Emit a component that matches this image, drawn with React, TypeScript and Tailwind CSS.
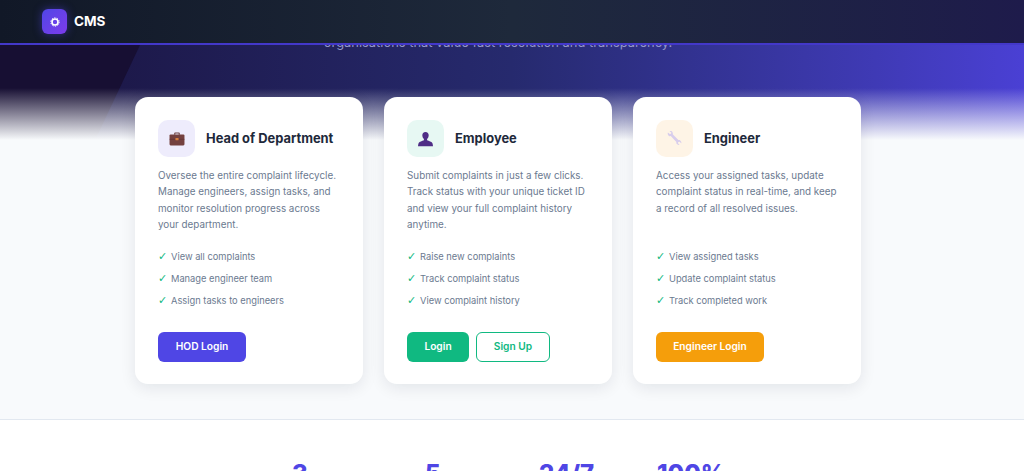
import type { ReactNode } from 'react';

type CardProps = {
  title: string;
  tint: string;
  icon: ReactNode;
  text: string[];
  items: string[];
  children: ReactNode;
};

const Briefcase = () => (
  <svg width="16" height="14" viewBox="0 0 17 15">
    <path d="M5.5 3V1.500Q5.500.6 6.400.6h4.200q.9 0 .9.9V3h-1.200V1.700H6.700V3z" fill="#6b3d3d" />
    <rect x="0.5" y="2.6" width="16" height="11.8" rx="1.2" fill="#74413f" />
    <rect x="0.5" y="7.4" width="16" height="0.6" fill="#5c3233" />
    <rect x="6.8" y="6.4" width="3.4" height="2.4" rx="0.4" fill="#d9803e" />
  </svg>
);

const Person = () => (
  <svg width="15" height="16" viewBox="0 0 16 16">
    <path
      d="M8 .4c2.200 0 3.400 1.500 3.400 3.600 0 1.600-.7 3.200-1.700 4v1.200c1.900.7 4.700 1.500 5.600 3 .4.8.6 2 .7 3.400H0c.1-1.400.3-2.600.7-3.400.9-1.500 3.700-2.300 5.600-3V8c-1-.8-1.700-2.400-1.700-4C4.600 1.900 5.800.4 8 .4z"
      fill="#4f2d86"
    />
  </svg>
);

const Wrench = () => (
  <svg width="15" height="15" viewBox="0 0 16 16">
    <path
      d="M1 1.500 3 3.300l1.300-.4.300-1.300L2.700.3C4.100-.2 5.400.300 6 1.500c.3.700.3 1.300.1 2l6 6.200c.7-.2 1.400-.1 2 .3 1 .7 1.500 1.900 1.100 3.100l-1.900-1.700-1.300.4-.3 1.300 1.800 1.600c-1.200.4-2.500 0-3.200-1-.4-.6-.5-1.300-.3-2L4 5.400c-.7.200-1.400.1-2-.2C.8 4.500.5 2.800 1 1.500z"
      fill="#d8cdec"
    />
  </svg>
);

function Card({ title, tint, icon, text, items, children }: CardProps) {
  return (
    <div className="w-[228px] h-[287px] bg-white rounded-[13px] px-[23px] pt-[23px] shadow-[0_4px_16px_rgba(15,23,42,0.09)] flex flex-col">
      <div className="flex items-center gap-[11px]">
        <div className={`w-[37px] h-[37px] rounded-[10px] flex items-center justify-center ${tint}`}>{icon}</div>
        <h3 className="text-[12.9px] font-bold text-[#1e293b] whitespace-nowrap">{title}</h3>
      </div>
      <div className="mt-[10px] h-[66px] text-[9.85px] leading-[16.3px] text-[#6b7a90]">
        {text.map((line) => (
          <p key={line} className="whitespace-nowrap">{line}</p>
        ))}
      </div>
      <ul className="mt-[13px] flex flex-col">
        {items.map((item) => (
          <li key={item} className="h-[22px] flex items-center text-[9.3px] text-[#6b7a90]">
            <span className="w-[13px] font-['DejaVu_Sans',sans-serif] text-[11px] font-bold text-[#10b981]">✓</span>
            <span>{item}</span>
          </li>
        ))}
      </ul>
      <div className="mt-[20px] flex gap-[7px]">{children}</div>
    </div>
  );
}

export default function App() {
  return (
    <div className="h-[471px] overflow-hidden bg-[#f8fafc] font-['Inter',sans-serif]">
      <header className="relative z-20 h-[45px] border-b-2 border-[#4338ca] bg-gradient-to-r from-[#111827] via-[#1e293b] to-[#1e1b4b] pl-[42px] flex items-center">
        <div className="w-[25px] h-[25px] rounded-[6px] bg-gradient-to-br from-[#4f46e5] to-[#7c3aed] shadow-[0_0_8px_rgba(79,70,229,0.5)] flex items-center justify-center">
          <svg width="10" height="10" viewBox="0 0 10 10">
            <circle cx="5" cy="5" r="3" fill="none" stroke="white" strokeWidth="1.6" />
            <circle cx="5" cy="5" r="4.2" fill="none" stroke="white" strokeWidth="1" strokeDasharray="1.3 1.34" />
          </svg>
        </div>
        <span className="ml-[7px] text-[13.5px] font-bold text-white">CMS</span>
      </header>

      <section className="relative h-[95px] overflow-hidden bg-gradient-to-r from-[#1a1440] via-[#262a6e] to-[#4a40d4]">
        <div className="absolute inset-y-0 left-0 w-[140px] bg-[#170f33] [clip-path:polygon(0_0,100%_0,68%_100%,0_100%)]" />
        <p className="relative -mt-[9px] pr-[28px] text-center text-[12.9px] leading-[14px] text-[#9496c8]">
          organisations that value fast resolution and transparency.
        </p>
        <div className="absolute inset-x-0 bottom-0 h-[52px] bg-gradient-to-b from-transparent to-[#f8fafc]" />
      </section>

      <main className="relative z-10 -mt-[43px] h-[323px] flex justify-center gap-[21px] pr-[28px] border-b border-[#e2e8f0]">
        <Card
          title="Head of Department"
          tint="bg-[#eeecfc]"
          icon={<Briefcase />}
          text={[
            'Oversee the entire complaint lifecycle.',
            'Manage engineers, assign tasks, and',
            'monitor resolution progress across',
            'your department.',
          ]}
          items={['View all complaints', 'Manage engineer team', 'Assign tasks to engineers']}
        >
          <button className="w-[88px] h-[30px] rounded-[6px] bg-[#4f46e5] text-[10.2px] font-semibold text-white">HOD Login</button>
        </Card>
        <Card
          title="Employee"
          tint="bg-[#e7f8f3]"
          icon={<Person />}
          text={[
            'Submit complaints in just a few clicks.',
            'Track status with your unique ticket ID',
            'and view your full complaint history',
            'anytime.',
          ]}
          items={['Raise new complaints', 'Track complaint status', 'View complaint history']}
        >
          <button className="w-[62px] h-[30px] rounded-[6px] bg-[#10b981] text-[10.2px] font-semibold text-white">Login</button>
          <button className="w-[74px] h-[30px] rounded-[6px] border border-[#10b981] bg-white text-[10.2px] font-semibold text-[#10b981]">Sign Up</button>
        </Card>
        <Card
          title="Engineer"
          tint="bg-[#fef4e6]"
          icon={<Wrench />}
          text={[
            'Access your assigned tasks, update',
            'complaint status in real-time, and keep',
            'a record of all resolved issues.',
          ]}
          items={['View assigned tasks', 'Update complaint status', 'Track completed work']}
        >
          <button className="w-[108px] h-[30px] rounded-[6px] bg-[#f59e0b] text-[10.2px] font-semibold text-white">Engineer Login</button>
        </Card>
      </main>

      <section className="h-[52px] bg-white pt-[36px] pl-[292px] flex text-[24px] leading-[35px] font-extrabold text-[#4f46e5]">
        <span className="w-[133px]">3</span>
        <span className="w-[114px]">5</span>
        <span className="w-[118px]">24/7</span>
        <span>100%</span>
      </section>
    </div>
  );
}
